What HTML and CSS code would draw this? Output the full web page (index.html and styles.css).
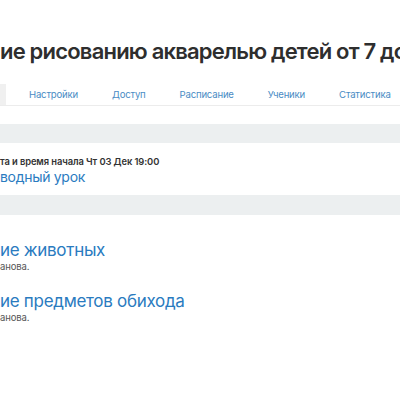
FILE: index.html
```html
<!DOCTYPE html>
<html lang="ru">
<head>
<meta charset="utf-8">
<link rel="stylesheet" href="styles.css">
</head>
<body>
<div class="page">
  <h1 class="title">ие рисованию акварелью детей от 7 до 12 лет</h1>
  <nav class="tabs">
    <span class="tab active"></span>
    <a class="tab">Настройки</a>
    <a class="tab">Доступ</a>
    <a class="tab">Расписание</a>
    <a class="tab">Ученики</a>
    <a class="tab">Статистика</a>
  </nav>
  <div class="band first"></div>
  <div class="lesson-head">
    <div class="meta">та и время начала Чт 03 Дек 19:00</div>
    <a class="intro">водный урок</a>
  </div>
  <div class="band"></div>
  <div class="lessons">
    <div class="lesson">
      <a class="lesson-title">ие животных</a>
      <div class="author">анова.</div>
    </div>
    <div class="lesson">
      <a class="lesson-title">ие предметов обихода</a>
      <div class="author">анова.</div>
    </div>
  </div>
</div>
</body>
</html>
```
FILE: styles.css
```css
html, body {
  margin: 0;
  padding: 0;
  background: #fff;
  overflow: hidden;
}
body {
  font-family: Inter, "Noto Sans", sans-serif;
  width: 400px;
  height: 400px;
}
.page {
  width: 400px;
  overflow: hidden;
}
.title {
  margin: 0;
  padding-top: 37px;
  height: 48px;
  box-sizing: border-box;
  font-size: 22px;
  line-height: 28px;
  font-weight: 600;
  color: #2e2e2e;
  white-space: nowrap;
  letter-spacing: -0.8px;
}
.tabs {
  display: flex;
  margin-top: 36px;
  height: 21px;
  border-bottom: 1px solid #ececec;
  white-space: nowrap;
}
.tab {
  font-size: 9.6px;
  line-height: 22px;
  letter-spacing: -0.2px;
  color: #4a8cc4;
  padding: 0 17px;
}
.tab.active {
  flex: 0 0 6px;
  background: #f0f0f0;
  padding: 0;
  margin-right: 23px;
}
.tab:nth-child(2) { padding-left: 0; }
.band {
  height: 20px;
  background: #eceff0;
}
.band.first {
  margin-top: 18px;
  height: 19px;
}
.lesson-head {
  height: 52px;
  padding-top: 12px;
  box-sizing: border-box;
}
.meta {
  font-size: 9.4px;
  line-height: 13px;
  font-weight: 600;
  color: #333;
  letter-spacing: -0.1px;
}
.intro {
  display: block;
  font-size: 14px;
  line-height: 17px;
  letter-spacing: -0.3px;
  color: #2a7bbf;
}
.lessons {
  padding-top: 24px;
}
.lesson {
  height: 51px;
}
.lesson-title {
  display: block;
  font-size: 17px;
  line-height: 22px;
  letter-spacing: -0.3px;
  color: #2a7bbf;
}
.author {
  font-size: 9.5px;
  line-height: 12px;
  color: #555;
  letter-spacing: -0.1px;
}
```
